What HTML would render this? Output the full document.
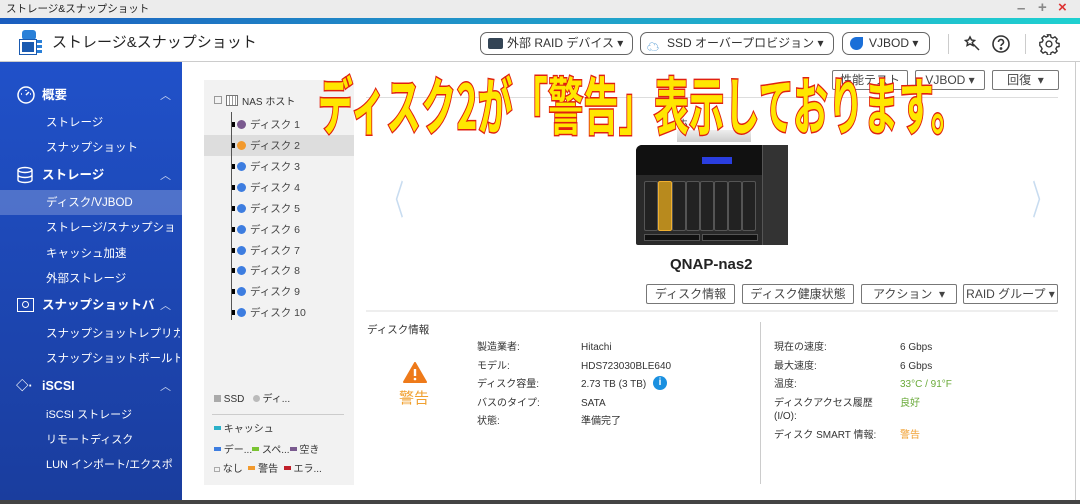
<!DOCTYPE html>
<html><head><meta charset="utf-8">
<style>
*{margin:0;padding:0;box-sizing:border-box}
body{width:1080px;height:504px;overflow:hidden;position:relative;background:#fff;font-family:"Liberation Sans","Noto Sans CJK JP",sans-serif;color:#333}
.a{position:absolute;white-space:nowrap}
.sb{position:absolute;left:0;top:62px;width:182px;height:438px;background:linear-gradient(#2051c9,#1a3d9e);overflow:hidden}
.sb .h{position:absolute;left:18px;color:#fff;font-weight:bold;font-size:12.5px;white-space:nowrap;line-height:16px}
.sb .i{position:absolute;left:46px;color:#fff;font-size:11.5px;white-space:nowrap;overflow:hidden;width:134px;line-height:16px}
.sb .c{position:absolute;left:160px;color:#c8d4f0;font-size:11px}
.btn{position:absolute;border:1px solid #777;background:#fff;font-size:12px;color:#444;height:20px;line-height:18px;text-align:center;border-radius:2px;white-space:nowrap}
.pill{position:absolute;top:32px;height:23px;border:1px solid #666;border-radius:7px;font-size:12px;line-height:21px;color:#333;padding-left:26px;white-space:nowrap}
.tr{position:absolute;left:232px;font-size:10.5px;color:#444;white-space:nowrap;line-height:13px}
.tr i{display:inline-block;width:9px;height:9px;border-radius:50%;background:#3d7de0;margin-right:4px;vertical-align:-1px}
.tr b{display:inline-block;width:3px;height:5px;background:#000;margin-right:2px;vertical-align:1px}
.k{position:absolute;font-size:10px;color:#333;white-space:nowrap;line-height:13px}
.slot{position:absolute;top:36px;width:14px;height:50px;background:#222;border:1px solid #555;border-radius:2px}
</style></head><body>
<div class="a" style="left:0;top:0;width:1080px;height:18px;background:#ececec"></div>
<div class="a" style="left:6px;top:3px;font-size:10.5px;color:#222;line-height:13px">ストレージ&amp;スナップショット</div>
<div class="a" style="left:1017px;top:0;font-size:15px;color:#888;font-weight:bold">–</div>
<div class="a" style="left:1038px;top:-1px;font-size:15px;color:#888;font-weight:bold">+</div>
<div class="a" style="left:1058px;top:-1px;font-size:15px;color:#d33;font-weight:bold">×</div>
<div class="a" style="left:0;top:18px;width:1080px;height:6px;background:linear-gradient(90deg,#1b5dbf,#2090c8 40%,#1fd0d0)"></div>
<div class="a" style="left:0;top:61px;width:1080px;height:1px;background:#ccc"></div>
<div class="a" style="left:20px;top:30px;width:22px;height:24px">
<div class="a" style="left:2px;top:0;width:14px;height:10px;background:#2a80d8;border-radius:3px"></div>
<div class="a" style="left:0;top:10px;width:16px;height:14px;background:#1a5ab0;border:2px solid #fff;outline:1px solid #1a5ab0"></div>
<div class="a" style="left:17px;top:10px;width:5px;height:14px;background:repeating-linear-gradient(#2a80d8 0 3px,#fff 3px 5px)"></div></div>
<div class="a" style="left:52px;top:34px;font-size:15px;color:#222;line-height:18px">ストレージ&amp;スナップショット</div>
<div class="pill" style="left:480px;width:153px">外部 RAID デバイス ▾<span class="a" style="left:7px;top:5px;width:15px;height:11px;background:#345;border-radius:2px"></span></div>
<div class="pill" style="left:640px;width:194px">SSD オーバープロビジョン ▾<span class="a" style="left:6px;top:4px;font-size:12px;color:#38c">☁</span></div>
<div class="pill" style="left:842px;width:88px">VJBOD ▾<span class="a" style="left:7px;top:4px;width:13px;height:13px;background:#1a6fd8;border-radius:50% 0 50% 50%"></span></div>
<div class="a" style="left:948px;top:34px;width:1px;height:20px;background:#ccc"></div>
<div class="a" style="left:1025px;top:34px;width:1px;height:20px;background:#ccc"></div>
<svg class="a" style="left:963px;top:34px" width="20" height="20" viewBox="0 0 20 20" fill="none" stroke="#333" stroke-width="1.5"><path d="M7 3l1.5 3 3 .5-2.2 2 .6 3-2.9-1.5L4.1 11.5l.6-3-2.2-2 3-.5z"/><path d="M10 10l6 6"/></svg>
<svg class="a" style="left:991px;top:34px" width="20" height="20" viewBox="0 0 20 20" fill="none" stroke="#333" stroke-width="1.6"><circle cx="10" cy="10" r="8"/><path d="M7.5 8a2.5 2.5 0 1 1 3.5 2.3c-.7.4-1 .9-1 1.7"/><circle cx="10" cy="14.5" r=".6" fill="#333"/></svg>
<svg class="a" style="left:1038px;top:33px" width="22" height="22" viewBox="0 0 24 24" fill="none" stroke="#333" stroke-width="1.5"><circle cx="12" cy="12" r="3.2"/><path d="M10.3 2h3.4l.5 2.6 2 1 2.3-1.4 2.4 2.4-1.4 2.3 1 2 2.5.5v3.4l-2.5.5-1 2 1.4 2.3-2.4 2.4-2.3-1.4-2 1-.5 2.5h-3.4l-.5-2.5-2-1-2.3 1.4-2.4-2.4 1.4-2.3-1-2L2 13.7v-3.4l2.6-.5 1-2-1.4-2.3 2.4-2.4 2.3 1.4 2-1z"/></svg>

<div class="sb">
<svg class="a" style="left:16px;top:23px" width="20" height="20" viewBox="0 0 20 20" fill="none" stroke="#fff" stroke-width="1.5"><circle cx="10" cy="10" r="8"/><path d="M10 10l3-3M5 9h1M10 5v1M14 9h1"/></svg>
<div class="h" style="left:42px;top:25px">概要</div><div class="c" style="top:25px">︿</div>
<div class="i" style="top:53px">ストレージ</div>
<div class="i" style="top:78px">スナップショット</div>
<svg class="a" style="left:16px;top:104px" width="18" height="18" viewBox="0 0 18 18" fill="none" stroke="#fff" stroke-width="1.4"><ellipse cx="9" cy="4" rx="7" ry="2.5"/><path d="M2 4v10c0 1.4 3 2.5 7 2.5s7-1.1 7-2.5V4M2 9c0 1.4 3 2.5 7 2.5s7-1.1 7-2.5"/></svg>
<div class="h" style="left:42px;top:105px">ストレージ</div><div class="c" style="top:105px">︿</div>
<div class="a" style="left:0;top:128px;width:182px;height:25px;background:rgba(255,255,255,.22)"></div>
<div class="i" style="top:133px">ディスク/VJBOD</div>
<div class="i" style="top:158px">ストレージ/スナップショ</div>
<div class="i" style="top:184px">キャッシュ加速</div>
<div class="i" style="top:209px">外部ストレージ</div>
<div class="a" style="left:17px;top:236px;width:17px;height:14px;border:1.5px solid #fff"><span class="a" style="left:4px;top:2px;width:7px;height:7px;border:1.5px solid #fff;border-radius:50%"></span></div>
<div class="h" style="left:42px;top:235px;width:112px;overflow:hidden">スナップショットバ</div><div class="c" style="top:235px">︿</div>
<div class="i" style="top:264px">スナップショットレプリカ</div>
<div class="i" style="top:289px">スナップショットボールト</div>
<div class="h" style="left:16px;top:316px">◇·</div>
<div class="h" style="left:42px;top:316px">iSCSI</div><div class="c" style="top:316px">︿</div>
<div class="i" style="top:345px;font-size:11px">iSCSI ストレージ</div>
<div class="i" style="top:370px;font-size:11px">リモートディスク</div>
<div class="i" style="top:395px;font-size:11px">LUN インポート/エクスポ</div>
</div>
<div class="a" style="left:0;top:500px;width:1080px;height:4px;background:#444"></div>
<div class="a" style="left:1075px;top:62px;width:1px;height:438px;background:#ccc"></div>

<div class="a" style="left:204px;top:80px;width:150px;height:405px;background:#f2f2f2"></div>
<div class="a" style="left:204px;top:135px;width:150px;height:21px;background:#ddd"></div>
<div class="a" style="left:214px;top:96px;width:8px;height:8px;border:1px solid #999"></div>
<div class="a" style="left:226px;top:95px;width:12px;height:11px;border:1px solid #777;background:repeating-linear-gradient(90deg,#fff 0 2px,#999 2px 3px)"></div>
<div class="tr" style="left:242px;top:96px;font-size:10px;color:#333">NAS ホスト</div>
<div class="a" style="left:231px;top:112px;width:1px;height:208px;background:#555"></div>
<div class="tr" style="top:119px"><b></b><i style="background:#7a5a8f"></i>ディスク 1</div>
<div class="tr" style="top:140px"><b></b><i style="background:#f29a2e"></i>ディスク 2</div>
<div class="tr" style="top:161px"><b></b><i></i>ディスク 3</div>
<div class="tr" style="top:182px"><b></b><i></i>ディスク 4</div>
<div class="tr" style="top:203px"><b></b><i></i>ディスク 5</div>
<div class="tr" style="top:224px"><b></b><i></i>ディスク 6</div>
<div class="tr" style="top:245px"><b></b><i></i>ディスク 7</div>
<div class="tr" style="top:265px"><b></b><i></i>ディスク 8</div>
<div class="tr" style="top:286px"><b></b><i></i>ディスク 9</div>
<div class="tr" style="top:307px"><b></b><i></i>ディスク 10</div>
<div class="k" style="left:214px;top:393px"><span style="display:inline-block;width:7px;height:7px;background:#aaa"></span> SSD &nbsp; <span style="display:inline-block;width:7px;height:7px;background:#bbb;border-radius:50%"></span> ディ...</div>
<div class="a" style="left:212px;top:414px;width:132px;height:1px;background:#ccc"></div>
<div class="k" style="left:214px;top:423px"><span style="display:inline-block;width:7px;height:4px;background:#2bb0c8;vertical-align:2px"></span> キャッシュ</div>
<div class="k" style="left:214px;top:444px"><span style="display:inline-block;width:7px;height:4px;background:#3d7de0;vertical-align:2px"></span> デー...<span style="display:inline-block;width:7px;height:4px;background:#7ac432;vertical-align:2px"></span> スペ...<span style="display:inline-block;width:7px;height:4px;background:#7a5a8f;vertical-align:2px"></span> 空き</div>
<div class="k" style="left:214px;top:463px"><span style="display:inline-block;width:6px;height:5px;border:1px solid #aaa"></span> なし &nbsp;<span style="display:inline-block;width:7px;height:4px;background:#f29a2e;vertical-align:2px"></span> 警告 &nbsp;<span style="display:inline-block;width:7px;height:4px;background:#c0202a;vertical-align:2px"></span> エラ...</div>

<div class="btn" style="left:832px;top:70px;width:76px">性能テスト</div>
<div class="btn" style="left:915px;top:70px;width:70px">VJBOD ▾</div>
<div class="btn" style="left:992px;top:70px;width:67px">回復 &nbsp;▾</div>
<div class="a" style="left:366px;top:97px;width:692px;height:1px;background:#ddd"></div>
<div class="a" style="left:677px;top:130px;width:74px;height:12px;background:linear-gradient(#eee,#ccc)"></div>
<div class="a" style="left:678px;top:115px;font-size:10px;color:#444">ホ</div>
<div class="a" style="left:374px;top:168px;font-size:40px;color:#c8dcf0;transform:scaleX(.5)">〈</div>
<div class="a" style="left:1022px;top:168px;font-size:40px;color:#c8dcf0;transform:scaleX(.5)">〉</div>

<div class="a" style="left:636px;top:145px;width:152px;height:100px;background:#2a2a2a;border-radius:6px 6px 2px 2px">
<div class="a" style="left:0;top:0;width:126px;height:30px;background:#111;border-radius:6px 0 0 0"></div>
<div class="a" style="left:126px;top:0;width:26px;height:100px;background:#333;border-left:1px solid #555"></div>
<div class="a" style="left:66px;top:12px;width:30px;height:7px;background:#2a3ee0"></div>
<div class="slot" style="left:8px"></div><div class="slot" style="left:22px;background:#b88a1e;border-color:#f0b030"></div><div class="slot" style="left:36px"></div><div class="slot" style="left:50px"></div><div class="slot" style="left:64px"></div><div class="slot" style="left:78px"></div><div class="slot" style="left:92px"></div><div class="slot" style="left:106px"></div>
<div class="a" style="left:8px;top:89px;width:56px;height:7px;background:#111;border:1px solid #555"></div>
<div class="a" style="left:66px;top:89px;width:56px;height:7px;background:#111;border:1px solid #555"></div>
</div>
<div class="a" style="left:670px;top:256px;font-size:15px;font-weight:bold;color:#222">QNAP-nas2</div>
<div class="btn" style="left:646px;top:284px;width:89px">ディスク情報</div>
<div class="btn" style="left:742px;top:284px;width:112px">ディスク健康状態</div>
<div class="btn" style="left:861px;top:284px;width:96px">アクション &nbsp;▾</div>
<div class="btn" style="left:963px;top:284px;width:95px">RAID グループ ▾</div>
<div class="a" style="left:366px;top:310px;width:692px;height:2px;background:#eee"></div>
<div class="a" style="left:367px;top:324px;font-size:10.5px;color:#333;line-height:13px">ディスク情報</div>
<div class="a" style="left:760px;top:322px;width:1px;height:162px;background:#ccc"></div>
<svg class="a" style="left:403px;top:362px" width="24" height="21" viewBox="0 0 24 21"><path d="M12 1L23 20H1z" fill="#ee7a1a" stroke="#ee7a1a" stroke-linejoin="round" stroke-width="2"/><path d="M12 7v7" stroke="#fff" stroke-width="2.4"/><circle cx="12" cy="17" r="1.3" fill="#fff"/></svg>
<div class="a" style="left:399px;top:390px;font-size:15px;color:#f0a030;line-height:18px">警告</div>
<div class="k" style="left:477px;top:341px">製造業者:</div><div class="k" style="left:581px;top:341px">Hitachi</div>
<div class="k" style="left:477px;top:360px">モデル:</div><div class="k" style="left:581px;top:360px">HDS723030BLE640</div>
<div class="k" style="left:477px;top:378px">ディスク容量:</div><div class="k" style="left:581px;top:378px">2.73 TB (3 TB)</div>
<div class="a" style="left:653px;top:376px;width:14px;height:14px;border-radius:50%;background:#1a90e0;color:#fff;font-size:10px;font-weight:bold;text-align:center;line-height:14px">i</div>
<div class="k" style="left:477px;top:397px">バスのタイプ:</div><div class="k" style="left:581px;top:397px">SATA</div>
<div class="k" style="left:477px;top:415px">状態:</div><div class="k" style="left:581px;top:415px">準備完了</div>
<div class="k" style="left:774px;top:341px">現在の速度:</div><div class="k" style="left:900px;top:341px">6 Gbps</div>
<div class="k" style="left:774px;top:360px">最大速度:</div><div class="k" style="left:900px;top:360px">6 Gbps</div>
<div class="k" style="left:774px;top:378px">温度:</div><div class="k" style="left:900px;top:378px;color:#6aaa3a">33°C / 91°F</div>
<div class="k" style="left:774px;top:397px;line-height:13px">ディスクアクセス履歴<br>(I/O):</div><div class="k" style="left:900px;top:397px;color:#6aaa3a">良好</div>
<div class="k" style="left:774px;top:429px">ディスク SMART 情報:</div><div class="k" style="left:900px;top:429px;color:#f0a030">警告</div>

<div class="a" style="left:318px;top:62px;font-size:62px;font-weight:bold;color:#ffe600;-webkit-text-stroke:3px #e02010;paint-order:stroke fill;transform:scaleX(0.56);transform-origin:0 0;letter-spacing:1px;font-family:'Noto Sans CJK JP',sans-serif;line-height:80px">ディスク2が「警告」表示しております。</div>
</body></html>
